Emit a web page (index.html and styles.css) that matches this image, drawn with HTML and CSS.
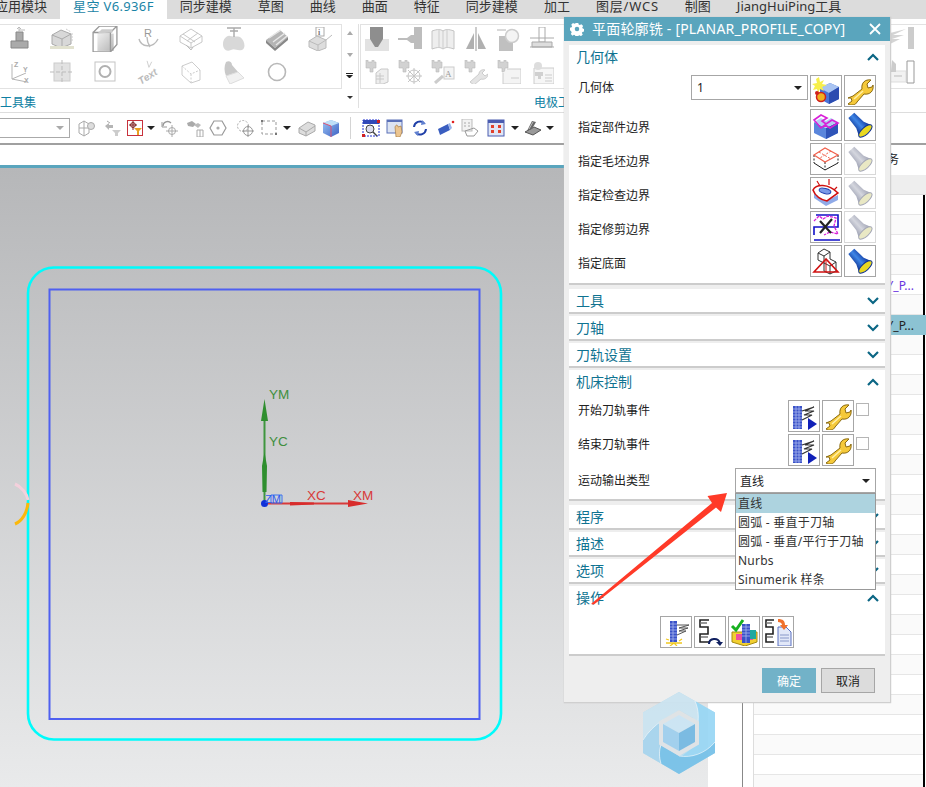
FILE: index.html
```html
<!DOCTYPE html>
<html lang="zh">
<head>
<meta charset="utf-8">
<title>平面轮廓铣</title>
<link rel="stylesheet" href="styles.css">
</head>
<body>
<svg class="defs" width="0" height="0" aria-hidden="true">
  <defs>
    <linearGradient id="gflash" x1="0" y1="0" x2="1" y2="0"><stop offset="0" stop-color="#0a2c8c"/><stop offset=".5" stop-color="#3f86e6"/><stop offset="1" stop-color="#0b2f96"/></linearGradient>
    <linearGradient id="gflashoff" x1="0" y1="0" x2="1" y2="0"><stop offset="0" stop-color="#9a9eb0"/><stop offset=".5" stop-color="#d4d6de"/><stop offset="1" stop-color="#a0a3b4"/></linearGradient>
    <linearGradient id="gwire" x1="0" y1="0" x2="1" y2="1"><stop offset="0" stop-color="#efefef"/><stop offset="1" stop-color="#b5b5b5"/></linearGradient>
    <linearGradient id="gblue" x1="0" y1="0" x2="1" y2="1"><stop offset="0" stop-color="#9cc4f4"/><stop offset="1" stop-color="#3d62c4"/></linearGradient>

    <symbol id="wrench" viewBox="0 0 28 28">
      <path d="M2 21l5-2 9-7c-1-6 3-10 9-9l-4 4 1 4 4-1 1-2c1 6-3 10-9 9l-7 8c-1 3-6 4-9 2l4-3-1-3z" fill="#f5c93a" stroke="#8a6a10" stroke-width="1"/>
      <path d="M8 22l9-8" stroke="#fff0a8" stroke-width="1.500" fill="none"/>
    </symbol>
    <symbol id="flash" viewBox="0 0 28 28">
      <g transform="rotate(-42 14 14)"><path d="M10 1h8l1 13 3 7H6l3-7z" fill="url(#gflash)"/><ellipse cx="14" cy="22" rx="8.500" ry="3.500" fill="#e8d820" stroke="#0b2f96"/></g>
    </symbol>
    <symbol id="flashoff" viewBox="0 0 28 28">
      <g transform="rotate(-42 14 14)"><path d="M10 1h8l1 13 3 7H6l3-7z" fill="url(#gflashoff)"/><ellipse cx="14" cy="22" rx="8.500" ry="3.500" fill="#e9e8c4" stroke="#a4a7b6"/></g>
    </symbol>
    <symbol id="geom" viewBox="0 0 28 28">
      <path d="M8 11l10-5 9 4v12l-10 5-9-5z" fill="#4a74d8"/><path d="M8 11l9 5 10-6-9-4z" fill="#a9c4f2"/><path d="M17 16v11l10-5V10z" fill="#2b4cb0"/>
      <path d="M7 0l1 5 4-2-2 4 5 1-5 2 2 4-4-2-2 4-1-4-4 1 2-4-3-2 5-1-1-4z" fill="#f7ef4a"/>
      <circle cx="9" cy="20" r="4.500" fill="#f0b020" stroke="#d0201c" stroke-width="1.500"/><circle cx="5" cy="16" r="2" fill="#d0201c"/>
    </symbol>
    <symbol id="part" viewBox="0 0 28 28">
      <path d="M2 11l12 6 12-6v11l-12 6-12-6z" fill="#5a86dc"/><path d="M14 17v11l12-6V11z" fill="#2f54b8"/><path d="M2 11l7-4 5 3 5-3 7 4-12 6z" fill="#b7cdf2"/>
      <path d="M2 9l7-5 6 3-5 3 4 3 6-4 6 3-8 5-5-3-4 3z" fill="none" stroke="#d820d8" stroke-width="1.600"/>
    </symbol>
    <symbol id="blank" viewBox="0 0 28 28">
      <path d="M2 18l11 7 13-7" fill="none" stroke="#222"/><path d="M2 10v8M26 10v8M13 17v8" stroke="#222" stroke-dasharray="2 1.500"/>
      <path d="M2 10l11-7 13 7-13 7z" fill="none" stroke="#f0604c" stroke-width="1.200"/><path d="M7 7l12 7M19 6l-11 7" stroke="#f0604c" stroke-dasharray="2 1.500"/>
    </symbol>
    <symbol id="check" viewBox="0 0 28 28">
      <path d="M2 14l12 8 12-6v5l-12 6-12-8z" fill="#8faae8"/>
      <path d="M1 11c3-6 15-7 25 3l-11 8C9 21 3 17 1 11z" fill="#fff" stroke="#d01010" stroke-width="1.600"/>
      <ellipse cx="13" cy="12" rx="6" ry="2.500" transform="rotate(14 13 12)" fill="#7a9ae8" stroke="#2040b0"/>
      <path d="M5 2l3 5M17 0v6M25 8l-3 3" stroke="#d01010" stroke-width="1.200"/>
    </symbol>
    <symbol id="trim" viewBox="0 0 28 28">
      <path d="M4 2h22v12H2v8M2 14h24M2 27h26" fill="none" stroke="#1010c8" stroke-width="1.600"/>
      <path d="M2 8l5-5 4 3 5-3 8 2-2 8 4 8-8-2-6 3" fill="none" stroke="#d820d8" stroke-dasharray="3 1" stroke-width="1.300"/>
      <path d="M8 8l11 12M20 6L8 20" stroke="#222" stroke-width="2.200"/>
    </symbol>
    <symbol id="floor" viewBox="0 0 28 28">
      <path d="M6 6l6-4 6 3v7l6 3v9l-6 3-6-3V16L6 13z" fill="#fff" stroke="#333"/><path d="M6 6l6 3 6-4M12 9v7M12 16l6 3 6-4M18 19v8" fill="none" stroke="#333"/>
      <path d="M14 12L2 25h24z" fill="none" stroke="#d01010" stroke-width="1.600"/><path d="M14 12v13" stroke="#d01010"/>
    </symbol>
    <symbol id="event" viewBox="0 0 28 28">
      <path d="M3 4h9v23H3z" fill="#3a52c8"/><path d="M3 7h9M3 10h9M3 13h9M3 16h9M3 19h9M3 22h9M3 25h9M6 4v23M9 4v23" stroke="#a8b6ee" stroke-width=".8"/>
      <path d="M12 9l12-4-9 4h9l-10 4h8l-10 5" fill="none" stroke="#333" stroke-width="1.200"/>
      <path d="M18 16l9 6-9 6z" fill="#1020b8"/>
    </symbol>
    <symbol id="gen" viewBox="0 0 28 28">
      <path d="M8 3h7v21H8z" fill="#3a52c8"/><path d="M8 6h7M8 9h7M8 12h7M8 15h7M8 18h7M8 21h7M11 3v21" stroke="#a8b6ee" stroke-width=".8"/>
      <path d="M15 7h12L17 10h9l-9 3h7l-9 4" fill="none" stroke="#555"/>
      <path d="M4 25h16M7 22l-3-1M17 23l3-2M8 28l4-3 3 3" stroke="#f0c820" stroke-width="1.300" fill="none"/>
    </symbol>
    <symbol id="replay" viewBox="0 0 28 28">
      <path d="M13 2H4v7h8v7H4v8h9" fill="none" stroke="#222" stroke-width="1.600"/><path d="M4 5h7M5 19h7" stroke="#777" stroke-width="1.600"/>
      <path d="M13 26c0-6 9-7 11-1" fill="none" stroke="#102060" stroke-width="2"/><path d="M20 24h7l-3 4z" fill="#102060"/>
    </symbol>
    <symbol id="verify" viewBox="0 0 28 28">
      <path d="M2 14h25v10l-12 4-13-4z" fill="#f2cf30" stroke="#a58a10"/><path d="M6 16h17v6H6z" fill="#ee4fa0"/>
      <path d="M12 6h8v19h-8z" fill="#3a52c8"/><path d="M12 9h8M12 12h8M12 15h8M12 18h8M16 6v19" stroke="#a8b6ee" stroke-width=".8"/><path d="M20 12h6v9h-6z" fill="#20a8a0"/>
      <path d="M2 8l4 4 7-10" fill="none" stroke="#18b020" stroke-width="3"/>
    </symbol>
    <symbol id="list" viewBox="0 0 28 28">
      <path d="M10 2H2v7h7v7H2v8h8" fill="none" stroke="#222" stroke-width="1.600"/><path d="M2 5h6M3 19h6" stroke="#777" stroke-width="1.600"/>
      <path d="M14 9h8l5 5v14H14z" fill="#e2e8f8" stroke="#5a70c0"/><path d="M16 17h9M16 20h9M16 23h9" stroke="#8898c8"/>
      <path d="M14 1c5 0 7 2 7 6h3l-4 5-4-5h2c0-2-2-3-4-3z" fill="#f0702c"/>
    </symbol>
    <symbol id="chevup" viewBox="0 0 12 8"><path d="M1 7l5-5 5 5" fill="none" stroke="#0b6684" stroke-width="2.200"/></symbol>
    <symbol id="chevdown" viewBox="0 0 12 8"><path d="M1 1l5 5 5-5" fill="none" stroke="#0b6684" stroke-width="2.200"/></symbol>

    <symbol id="plug" viewBox="0 0 24 24"><path d="M1 0h2v2h4V0h2v2h2v6H8v4H5V8H1z" fill="#d2d2d2" stroke="#bbb" stroke-width=".6"/></symbol>
  </defs>
</svg>

<div class="app">
  <nav class="tabs">
    <span class="tab">应用模块</span>
    <span class="tab active">星空 V6.936F</span>
    <span class="tab">同步建模</span>
    <span class="tab">草图</span>
    <span class="tab">曲线</span>
    <span class="tab">曲面</span>
    <span class="tab">特征</span>
    <span class="tab">同步建模</span>
    <span class="tab">加工</span>
    <span class="tab tab-w">图层/WCS</span>
    <span class="tab">制图</span>
    <span class="tab">JiangHuiPing工具</span>
  </nav>

  <section class="ribbon">
    <div class="rg1">
      <div class="rcol">
        <div class="rbox grid8">
          <svg class="ri" viewBox="0 0 24 24"><path d="M9 5h7v9H9z" fill="#aaa" stroke="#888"/><path d="M4 14h17v7H4z" fill="#aaa" stroke="#888"/><path d="M12 5V0M10 2l2-2 2 2M12 3h6" fill="none" stroke="#bbb"/></svg>
          <svg class="ri" viewBox="0 0 24 24"><path d="M2 8l9-5 10 4v10l-10 4-9-4z" fill="#d8d8d8" stroke="#aaa"/><path d="M2 8l10 4 9-5M12 12v9" fill="none" stroke="#aaa"/><path d="M0 19h24v3H0z" fill="#e2e2d0"/><path d="M16 2l5 3M22 6v8" stroke="#ccc" stroke-dasharray="2 1"/></svg>
          <svg class="ri ri-lg" viewBox="0 0 24 24"><path d="M5 7h15v16H5z" fill="url(#gwire)"/><path d="M1 6h16v18H1zM1 6l6-6h16v17l-6 7M17 6l6-6" fill="none" stroke="#999" stroke-width="1.200"/><path d="M5 7l4-4h10v3" fill="#ccc"/></svg>
          <svg class="ri" viewBox="0 0 24 24"><text x="8" y="10" class="ri-t">R</text><path d="M3 12c2 8 14 10 19 0M11 10c0 4 1 7 3 10" fill="none" stroke="#bbb" stroke-width="1.400"/></svg>
          <svg class="ri" viewBox="0 0 24 24"><path d="M1 9l11-7 11 7-11 7zM1 9v6l11 6 11-6V9M12 16v5M4 7l12 8M19 6L8 14" fill="none" stroke="#c8c8c8"/><path d="M7 18l5 5 2-3" fill="none" stroke="#bbb"/></svg>
          <svg class="ri" viewBox="0 0 24 24"><path d="M1 17c0-5 4-9 7-8 4 1 8 0 10 1 5 3 6 12 2 13-6 1-7-2-11 0-5 2-8-1-8-6z" fill="#d8d8d8"/><path d="M5 1h14M12 1v9M8 4h8" stroke="#aaa" stroke-width="1.400"/></svg>
          <svg class="ri" viewBox="0 0 24 24"><path d="M1 13L15 3l8 7-13 11z" fill="#b5b5b5"/><path d="M4 11l12-8M8 15l12-9M11 18l11-9" stroke="#e8e8e8" stroke-width="1.400"/><path d="M1 13v3l9 8 13-11v-3L10 21z" fill="#888"/></svg>
          <svg class="ri" viewBox="0 0 24 24"><rect x="8" y="0" width="8" height="9" fill="#fff" stroke="#aaa"/><text x="10" y="8" class="ri-i">i</text><path d="M1 14l8-5 9 4v8l-8 3-9-4z" fill="#ddd" stroke="#bbb"/><path d="M1 14l9 4 8-5M10 18v6M18 13l6-5" fill="none" stroke="#bbb"/></svg>

          <svg class="ri" viewBox="0 0 24 24"><path d="M5 19V4M5 19l14-6M5 19l15 3" stroke="#b5b5b5" fill="none"/><text x="7" y="7" class="ri-s">Z</text><text x="16" y="12" class="ri-s">Y</text><text x="17" y="23" class="ri-s">X</text></svg>
          <svg class="ri" viewBox="0 0 24 24"><rect x="4" y="3" width="16" height="18" fill="#e2e2e2" stroke="#ccc"/><path d="M12 0v24M0 12h24" stroke="#bbb" stroke-dasharray="4 2"/></svg>
          <svg class="ri" viewBox="0 0 24 24"><rect x="2" y="2" width="20" height="19" fill="none" stroke="#c4c4c4"/><circle cx="12" cy="11.500" r="5.500" fill="none" stroke="#b0b0b0" stroke-width="2"/></svg>
          <svg class="ri ri-lg" viewBox="0 0 28 24"><text x="1" y="20" class="ri-text" transform="rotate(-32 14 14)">Text</text><path d="M13 0l2 7 3-6" fill="none" stroke="#ccc"/></svg>
          <svg class="ri" viewBox="0 0 24 24"><path d="M3 6l10-4 8 8v10l-9 3-9-8z" fill="none" stroke="#ccc"/><path d="M3 6l9 8 9-4M12 14v9" fill="none" stroke="#ccc" stroke-dasharray="2 1.500"/></svg>
          <svg class="ri" viewBox="0 0 24 24"><path d="M4 2c3-2 6 0 6 3l6 7-12 4c-2-5-2-10 0-14z" fill="#c9c9c9"/><path d="M4 16l12-4 6 6-14 6z" fill="#f1f1f1" stroke="#ddd"/></svg>
          <svg class="ri" viewBox="0 0 24 24"><circle cx="12" cy="12" r="8.500" fill="none" stroke="#b8b8b8" stroke-width="1.600"/></svg>
        </div>
        <div class="rlabel"><span>工具集</span></div>
      </div>
      <div class="rscroll">
        <i class="up"></i><i class="down"></i><i class="menu"></i><i class="more"></i>
      </div>
    </div>
    <div class="rg2">
      <div class="rbox rbox2">
        <div class="grid6">
          <svg class="ri" viewBox="0 0 24 24"><path d="M0 12h24v13H0z" fill="#e2e2e2"/><path d="M5 0h13v12l-5 8h-3l-5-8z" fill="#8e8e8e"/></svg>
          <svg class="ri" viewBox="0 0 24 24"><path d="M0 11h9l4-3h3V0h8v22h-8v-6h-3l-4-3H0z" fill="#bdbdbd"/></svg>
          <svg class="ri" viewBox="0 0 24 24"><path d="M1 4c6-2 8-2 11 0 3-2 5-2 11 0v18c-6-2-8-2-11 0-3-2-5-2-11 0z" fill="#eee" stroke="#c4c4c4"/><path d="M12 4v18M8 3v18M16 3v18" stroke="#ccc"/></svg>
          <svg class="ri" viewBox="0 0 24 24"><path d="M2 22L10 6v16zM22 22L14 6v16z" fill="#b0b0b0"/><path d="M12 0v24" stroke="#999"/></svg>
          <svg class="ri" viewBox="0 0 24 24"><path d="M2 9h14v15H2z" fill="#c0c0c0"/><circle cx="15" cy="9" r="6.500" fill="#f4f4f4" stroke="#ccc" stroke-width="1.500"/><path d="M0 3h9" stroke="#ccc" stroke-width="1.500"/></svg>
          <svg class="ri" viewBox="0 0 24 24"><path d="M9 0h6v15H9z" fill="#fff" stroke="#aaa"/><path d="M0 11h24M2 15h20v5H2zM0 20h24" fill="#ddd" stroke="#aaa"/></svg>

          <svg class="ri" viewBox="0 0 24 24"><use href="#plug" width="24" height="24"/><path d="M11 13l5-4h7v13l-5 2h-7z" fill="#eee" stroke="#c8c8c8"/><path d="M11 16h8M11 19h8M15 13v10" stroke="#c8c8c8"/></svg>
          <svg class="ri" viewBox="0 0 24 24"><use href="#plug" width="24" height="24"/><circle cx="16" cy="16" r="6" fill="none" stroke="#c4c4c4"/><path d="M16 8v16M8 16h16M10 10l12 12M22 10L10 22" stroke="#c4c4c4"/></svg>
          <svg class="ri" viewBox="0 0 24 24"><use href="#plug" width="24" height="24"/><rect x="13" y="7" width="10" height="12" fill="#f4f4f4" stroke="#ccc"/><text x="14" y="17" class="ri-a">A</text><path d="M4 23l8-7" stroke="#ccc" stroke-width="3"/></svg>
          <svg class="ri" viewBox="0 0 24 24"><use href="#plug" width="24" height="24"/><path d="M6 22l9-8c0-3 3-5 6-4l-3 3 3 3 3-2c0 4-4 6-7 5l-7 6z" fill="#e4e4e4" stroke="#ccc"/></svg>
          <svg class="ri" viewBox="0 0 24 24"><use href="#plug" width="24" height="24"/><path d="M10 9h14v15H6V13" fill="#f4f4f4" stroke="#ccc"/><path d="M14 18h8" stroke="#ccc"/></svg>
          <svg class="ri" viewBox="0 0 24 24"><path d="M4 8h20v16H4z" fill="#f6f6f6" stroke="#ccc"/><path d="M15 15h7M15 18h7M15 21h7" stroke="#ccc"/><circle cx="8" cy="6" r="4" fill="#ddd"/><path d="M5 12h8v4h-2v3H8v-3H5z" fill="#d0d0d0"/></svg>
        </div>
        <div class="grid2">
          <svg class="ri" viewBox="0 0 24 24"><path d="M0 6h8l16-4-13 6h11l-12 4h8l-10 5h-3l-1 6-3-6z" fill="#d4d4d4"/></svg>
          <svg class="ri" viewBox="0 0 24 24"><path d="M2 0h6v22H2z" fill="#ccc"/></svg>
          <svg class="ri" viewBox="0 0 24 24"><path d="M2 11h22v11H2z" fill="#f2f2f2" stroke="#ddd"/><path d="M10 0l4 4v8h-5z" fill="#ccc"/><path d="M12 16h8" stroke="#bbb"/></svg>
          <svg class="ri" viewBox="0 0 24 24"><path d="M1 1h7v22H1z" fill="none" stroke="#999"/></svg>
        </div>
      </div>
      <div class="rlabel rlabel2"><span>电极工具</span></div>
    </div>
  </section>

  <section class="toolbar">
    <div class="tcombo"><i class="caret caret-grey"></i></div>
    <svg class="ti g8" viewBox="0 0 18 18"><path d="M1 5l5-3 5 3v9l-5 3-5-3zM6 2v15M1 9h10" fill="none" stroke="#aaa"/><circle cx="13" cy="7" r="3.500" fill="#ddd" stroke="#aaa"/></svg>
    <svg class="ti g8" viewBox="0 0 18 18"><path d="M1 7l4-3v2h4v3H5v2z" fill="#b5b5b5"/><path d="M8 11h9l-3 3v3h-3v-3z" fill="#ccc"/><path d="M3 2l3 2" stroke="#aaa"/></svg>
    <span class="ti g5 tbox"><svg viewBox="0 0 14 14"><path d="M5 0v9M1 4h8" stroke="#7a1a1a"/><circle cx="5" cy="4" r="2.400" fill="none" stroke="#7a1a1a"/><path d="M6 7h8l-3 3v4H9v-4z" fill="#e8a020"/></svg></span>
    <i class="caret g4"></i>
    <svg class="ti g6" viewBox="0 0 18 18"><path d="M2 7c0-4 5-6 8-3" fill="none" stroke="#999" stroke-width="1.400"/><path d="M1 3v5h5" fill="none" stroke="#999"/><circle cx="11" cy="12" r="3.500" fill="none" stroke="#aaa"/><path d="M11 6v12M5 12h12" stroke="#aaa"/></svg>
    <svg class="ti g7" viewBox="0 0 18 18"><path d="M1 4l5-2 4 3-3 3-5-1z" fill="#aaa"/><path d="M8 6l4-2 3 2-3 3z" fill="#bbb"/><path d="M11 11h6v7h-6zM14 11v7" fill="none" stroke="#aaa"/></svg>
    <svg class="ti g5" viewBox="0 0 18 18"><path d="M5 2h8l4 7-4 7H5L1 9z" fill="none" stroke="#999" stroke-width="1.200"/><circle cx="9" cy="9" r="1.600" fill="#aaa"/></svg>
    <svg class="ti g9" viewBox="0 0 18 18"><circle cx="7" cy="7" r="5.500" fill="none" stroke="#aaa" stroke-dasharray="2 1.500"/><circle cx="12" cy="12" r="4.500" fill="none" stroke="#999"/><path d="M12 6v12M6 12h12" stroke="#999"/></svg>
    <svg class="ti" viewBox="0 0 18 18"><rect x="2" y="2" width="14" height="13" fill="none" stroke="#999" stroke-dasharray="3 2"/><rect x="1" y="1" width="2" height="2" fill="#777"/><rect x="15" y="14" width="2" height="2" fill="#777"/></svg>
    <i class="caret g5"></i>
    <svg class="ti g7" viewBox="0 0 18 18"><path d="M1 9l9-6 7 3v6l-9 5-7-3z" fill="#ddd" stroke="#aaa"/><path d="M1 9l7 4 9-6M8 13v4" fill="none" stroke="#aaa"/></svg>
    <svg class="ti" viewBox="0 0 18 18"><path d="M1 4l8-3 8 3v10l-8 4-8-4z" fill="url(#gblue)"/><path d="M1 4l8 3 8-3-8-3z" fill="#bfe0f8"/><path d="M1 4l8 3v11" fill="none" stroke="#e05070"/></svg>
    <i class="tsep g10"></i>
    <svg class="ti g11" viewBox="0 0 18 18"><rect x="1" y="1" width="16" height="16" fill="#fff" stroke="#2030d0" stroke-dasharray="2 1"/><rect x="1" y="1" width="16" height="4" fill="#3048b8"/><circle cx="8" cy="10" r="4" fill="#dde" stroke="#444"/><path d="M11 13l4 4" stroke="#444" stroke-width="1.500"/><rect x="15" y="1" width="3" height="3" fill="#d02020"/><rect x="0" y="15" width="3" height="3" fill="#d02020"/></svg>
    <svg class="ti" viewBox="0 0 18 18"><rect x="1" y="1" width="15" height="13" fill="#dde4f2" stroke="#5a70b8"/><path d="M1 1h15v2H1z" fill="#5a70b8"/><path d="M9 8c1-3 3-2 3 0l3-1 1 6-2 5H10z" fill="#ecc590" stroke="#9a7038" stroke-width=".6"/></svg>
    <svg class="ti g7" viewBox="0 0 18 18"><path d="M3 8a6 6 0 0 1 10-4" fill="none" stroke="#2040a8" stroke-width="2"/><path d="M15 10a6 6 0 0 1-10 4" fill="none" stroke="#2040a8" stroke-width="2"/><path d="M11 1l4 4-5 1zM7 17l-4-4 5-1z" fill="#6080d0"/></svg>
    <svg class="ti g8" viewBox="0 0 18 18"><path d="M1 10l10-5 2 6-10 5z" fill="#3a5ec0"/><path d="M11 5l2 6 2-2-2-5z" fill="#9ab4ea"/><circle cx="16" cy="3" r="1.300" fill="#e02020"/></svg>
    <svg class="ti" viewBox="0 0 18 18"><rect x="1" y="0" width="10" height="12" fill="#f2f2f2" stroke="#bbb"/><path d="M3 4h2M3 7h2M7 4h2M7 7h2" stroke="#aaa"/><path d="M4 12l9-3 4 3-4 5H6z" fill="none" stroke="#999"/></svg>
    <svg class="ti g8" viewBox="0 0 18 18"><rect x="1" y="1" width="16" height="16" fill="#dfe6f5" stroke="#4a5cb0"/><rect x="1" y="1" width="16" height="3" fill="#4a5cb0"/><path d="M4 6h3v3H4zM11 6h3v3h-3zM4 11h3v3H4zM11 11h3v3h-3z" fill="#e0402c"/></svg>
    <i class="caret"></i>
    <svg class="ti g5" viewBox="0 0 18 18"><path d="M1 13l9-5 7 3-8 5z" fill="#999" stroke="#555"/><path d="M3 12L8 2l4 1-4 7z" fill="#666"/><path d="M5 10l4-7" stroke="#bbb"/></svg>
    <i class="caret g4"></i>
  </section>

  <main class="main">
    <div class="viewwrap">
      <div class="view">
        <svg class="scene" viewBox="0 168 708 619">
          <rect x="28" y="267.500" width="473" height="472" rx="26" fill="none" stroke="#00fbfb" stroke-width="2.600"/>
          <rect x="49.500" y="289.500" width="430" height="429.500" fill="none" stroke="#4f60f0" stroke-width="2"/>
          <path d="M15 484c7 3 12 10 13 16" fill="none" stroke="#f4d0dc" stroke-width="3"/>
          <path d="M28 503c-1 10-6 18-13 21" fill="none" stroke="#fbb80a" stroke-width="3"/>
          <path d="M264.500 503V410" stroke="#3f963f" stroke-width="2"/>
          <path d="M264.500 399l-3.500 22h7zM264.500 452l-2.500 14 .5 26h4l.5-26z" fill="#2f8f2f"/>
          <path d="M265 503.500h93" stroke="#d83a3a" stroke-width="2"/>
          <path d="M368 503.500l-20-3.500v7zM290 502l24 .5v2l-24 1z" fill="#d82c2c"/>
          <circle cx="264.500" cy="503.500" r="3.500" fill="#1030d8"/>
          <path d="M271 495h11v8h-11z" fill="none" stroke="#3a70f0"/>
          <text class="scene-z" x="265" y="503">ZM</text>
          <text class="scene-g" x="269" y="399">YM</text>
          <text class="scene-g" x="269" y="446">YC</text>
          <text class="scene-r" x="307" y="500">XC</text>
          <text class="scene-r" x="353" y="500">XM</text>
        </svg>
      </div>
    </div>
    <aside class="side">
      <div class="strip"></div>
      <div class="panel">
        <div class="navcap">任务</div>
        <div class="thead"></div>
        <div class="tree">
          <div class="trow"></div>
          <div class="trow"></div>
          <div class="trow"></div>
          <div class="trow"></div>
          <div class="trow purple">COPY_P...</div>
          <div class="trow"></div>
          <div class="trow sel">COPY_P...</div>
        </div>
      </div>
    </aside>
  </main>
</div>

<div class="dialog">
  <header class="dlg-title">
    <svg class="gear" viewBox="0 0 16 16"><path d="M6.500 1h3l.4 1.800 1.300.6L13 2.500l2 2-1 1.700.6 1.300 1.400.4v3l-1.800.4-.6 1.300 1 1.600-2 2-1.700-1-1.300.6-.4 1.200h-3l-.4-1.800-1.300-.6-1.600 1-2-2 1-1.700-.6-1.300L0 9.500v-3l1.800-.4.600-1.300-1-1.700 2-2 1.700 1 1.300-.6z" fill="#fff"/><circle cx="8" cy="8" r="2.600" fill="#5aa5bd"/></svg>
    <span class="dlg-name">平面轮廓铣 - [PLANAR_PROFILE_COPY]</span>
    <svg class="close" viewBox="0 0 12 12"><path d="M1 1l10 10M11 1L1 11" stroke="#fff" stroke-width="1.800"/></svg>
  </header>
  <div class="dlg-body">
    <section class="sec">
      <div class="sec-head"><span>几何体</span><svg class="chev"><use href="#chevup"/></svg></div>
      <div class="row">
        <span class="lab lab-c">几何体</span>
        <div class="combo combo-geo"><span>1</span><i class="caret"></i></div>
        <button class="ib"><svg><use href="#geom"/></svg></button>
        <button class="ib"><svg><use href="#wrench"/></svg></button>
      </div>
      <div class="row"><span class="lab lab-d">指定部件边界</span><button class="ib"><svg><use href="#part"/></svg></button><button class="ib"><svg><use href="#flash"/></svg></button></div>
      <div class="row"><span class="lab lab-d">指定毛坯边界</span><button class="ib"><svg><use href="#blank"/></svg></button><button class="ib off"><svg><use href="#flashoff"/></svg></button></div>
      <div class="row"><span class="lab lab-d">指定检查边界</span><button class="ib"><svg><use href="#check"/></svg></button><button class="ib off"><svg><use href="#flashoff"/></svg></button></div>
      <div class="row"><span class="lab lab-d">指定修剪边界</span><button class="ib"><svg><use href="#trim"/></svg></button><button class="ib off"><svg><use href="#flashoff"/></svg></button></div>
      <div class="row"><span class="lab lab-d">指定底面</span><button class="ib"><svg><use href="#floor"/></svg></button><button class="ib"><svg><use href="#flash"/></svg></button></div>
    </section>
    <section class="sec closed"><div class="sec-head"><span>工具</span><svg class="chev"><use href="#chevdown"/></svg></div></section>
    <section class="sec closed"><div class="sec-head"><span>刀轴</span><svg class="chev"><use href="#chevdown"/></svg></div></section>
    <section class="sec closed"><div class="sec-head"><span>刀轨设置</span><svg class="chev"><use href="#chevdown"/></svg></div></section>
    <section class="sec">
      <div class="sec-head"><span>机床控制</span><svg class="chev"><use href="#chevup"/></svg></div>
      <div class="row"><span class="lab lab-t">开始刀轨事件</span><button class="ib"><svg><use href="#event"/></svg></button><button class="ib"><svg><use href="#wrench"/></svg></button><i class="cb"></i></div>
      <div class="row"><span class="lab lab-t">结束刀轨事件</span><button class="ib"><svg><use href="#event"/></svg></button><button class="ib"><svg><use href="#wrench"/></svg></button><i class="cb"></i></div>
      <div class="row">
        <span class="lab lab-c">运动输出类型</span>
        <div class="combo combo-type"><span>直线</span><i class="caret"></i>
          <ul class="menu-list">
            <li class="hl">直线</li>
            <li>圆弧 - 垂直于刀轴</li>
            <li>圆弧 - 垂直/平行于刀轴</li>
            <li>Nurbs</li>
            <li>Sinumerik 样条</li>
          </ul>
        </div>
      </div>
    </section>
    <section class="sec closed"><div class="sec-head"><span>程序</span><svg class="chev"><use href="#chevdown"/></svg></div></section>
    <section class="sec closed"><div class="sec-head"><span>描述</span><svg class="chev"><use href="#chevdown"/></svg></div></section>
    <section class="sec closed"><div class="sec-head"><span>选项</span><svg class="chev"><use href="#chevdown"/></svg></div></section>
    <section class="sec">
      <div class="sec-head"><span>操作</span><svg class="chev"><use href="#chevup"/></svg></div>
      <div class="row ops">
        <button class="ib"><svg><use href="#gen"/></svg></button>
        <button class="ib"><svg><use href="#replay"/></svg></button>
        <button class="ib"><svg><use href="#verify"/></svg></button>
        <button class="ib"><svg><use href="#list"/></svg></button>
      </div>
    </section>
    <footer class="dlg-foot">
      <button class="btn ok">确定</button>
      <button class="btn">取消</button>
    </footer>
  </div>
</div>

<svg class="logo" viewBox="0 0 72 82">
  <path d="M36 0L72 20.500V61L36 82 0 61V20.500z" fill="#b5dcf0"/>
  <path d="M0 20.500L36 0l16 9c4 9 4 19 2 27l-4-10-14-8-16 10C12 33 5 40 0 48z" fill="#cbe4f1"/>
  <path d="M52 9l20 11.500V50c-6 8-14 12-22 14-4 2-8 2-12 1l15-12 1-17c2-8 2-18-2-27z" fill="#97d6f5"/>
  <path d="M18 53l18 11c12 2 26-2 36-14v11L36 82 18 71.500c-2-6-2-13.500 0-18.500z" fill="#74c0e8"/>
  <path d="M0 48c5-8 12-15 20-20l-2 25c-2 5-2 12.500 0 18.500L0 61z" fill="#a5d4ee"/>
  <path d="M52 9c4 9 4 19 2 27M0 48c5-8 12-15 20-20M72 50c-10 12-24 16-36 14M18 53c-2 5-2 12.500 0 18.500" fill="none" stroke="#fff" stroke-opacity=".6"/>
  <path d="M36 18l20 11.500v23L36 64 16 52.500v-23z" fill="#dfe3e6"/>
  <path d="M36 23l16 9-16 9-16-9z" fill="#cbe5f5"/>
  <path d="M20 32l16 9v18l-16-9z" fill="#9dcfee"/>
  <path d="M52 32l-16 9v18l16-9z" fill="#73b8e2"/>
</svg>

<svg class="arrow" viewBox="585 490 147 118">
  <path d="M591 604L712 503l-4.500-7 19.500-3-6 19-5-4.500L594 604.500z" fill="#ff3a28"/>
</svg>
</body>
</html>
```
FILE: styles.css
```css
* { box-sizing: border-box; }
html, body { margin: 0; height: 100%; }
body {
  width: 926px;
  height: 787px;
  overflow: hidden;
  position: relative;
  background: #fff;
  color: #222;
  font-family: "Noto Sans", "Noto Sans CJK SC", sans-serif;
  font-size: 12px;
}
.defs { position: absolute; }
i { display: block; }

.app { display: flex; flex-direction: column; height: 787px; }

/* tabs */
.tabs { display: flex; height: 19px; flex: none; margin-left: -18px; background: #dcdcdc; width: 944px; }
.tab { padding: 0 13px; font-size: 13px; line-height: 12px; white-space: nowrap; color: #333; }
.tab.active { background: #fff; color: #1a84a6; height: 19px; letter-spacing: .36px; }
.tab-w { letter-spacing: .8px; }

/* ribbon */
.ribbon { display: flex; flex: none; height: 94px; padding-top: 5px; border-bottom: 1px solid #ddd; overflow: hidden; background: #fff; }
.rg1 { display: flex; flex: none; width: 360px; margin-left: -4px; margin-right: 4px; height: 84px; }
.rcol { width: 346px; flex: none; }
.rbox { border: 2px solid #e2e2e2; height: 65px; background: #fff; }
.grid8 { display: grid; grid-template-columns: repeat(8, 43px); grid-auto-rows: 28px; row-gap: 5px; justify-items: center; align-items: center; border-width: 1px; }
.ri { width: 24px; height: 24px; display: block; }
.ri-lg { width: 26px; height: 26px; }
.ri-t { font: 11px "Liberation Sans", sans-serif; fill: #999; }
.ri-i { font: bold 8px "Liberation Serif", serif; fill: #777; }
.ri-s { font: bold 7px "Liberation Sans", sans-serif; fill: #aaa; }
.ri-a { font: 9px "Liberation Serif", serif; fill: #999; }
.ri-text { font: italic bold 11px "Liberation Sans", sans-serif; fill: #bbb; }
.rlabel { height: 18px; font-size: 12px; color: #0f7fa3; padding: 7px 0 0 4px; line-height: 14px; }
.rscroll { width: 18px; flex: none; display: flex; flex-direction: column; align-items: center; border-right: 1px solid #e0e0e0; margin-left: -1px; height: 84px; }
.rscroll i { border-left: 3px solid transparent; border-right: 3px solid transparent; }
.rscroll .up { margin-top: 7px; border-bottom: 4px solid #aaa; }
.rscroll .down { margin-top: 18px; border-top: 4px solid #aaa; }
.rscroll .menu { margin-top: 16px; width: 7px; height: 5px; border: 0; border-top: 1px solid #222; }
.rscroll .menu::after { content: ""; display: block; margin-top: 1px; border-left: 3.500px solid transparent; border-right: 3.500px solid transparent; border-top: 3.500px solid #222; }
.rscroll .more { margin-top: 18px; border-top: 3px solid #333; }
.rg2 { flex: 1; min-width: 0; margin-right: -3px; }
.rbox2 { display: flex; border-width: 1px; border-right: 0; }
.grid6 { display: grid; grid-template-columns: repeat(6, 33px); grid-auto-rows: 28px; row-gap: 5px; justify-items: center; align-items: center; margin-left: -1px; }
.grid2 { display: grid; grid-template-columns: repeat(2, 24px); grid-auto-rows: 28px; row-gap: 5px; justify-items: center; align-items: center; margin-left: auto; margin-right: -1px; }
.rlabel2 { padding-left: 174px; white-space: nowrap; }

/* toolbar */
.toolbar { display: flex; flex: none; align-items: center; height: 32px; border-bottom: 2px solid #a0a0a0; background: #fff; }
.tcombo { width: 71px; height: 20px; margin-left: -1px; border: 1px solid #aaa; display: flex; align-items: center; justify-content: flex-end; padding-right: 5px; flex: none; }
.ti { width: 18px; height: 18px; flex: none; margin-left: 6px; display: block; }
.tbox { border: 1px solid #c8313c; width: 16px; height: 16px; }
.tbox svg { display: block; width: 14px; height: 14px; }
.caret { flex: none; width: 0; height: 0; border-left: 4px solid transparent; border-right: 4px solid transparent; border-top: 4px solid #222; margin-left: 6px; }
.caret-grey { border-top-color: #aaa; }
.tsep { width: 1px; height: 22px; background: #d4d4d4; flex: none; }
.g4 { margin-left: 4px; } .g5 { margin-left: 5px; } .g7 { margin-left: 7px; } .g8 { margin-left: 8px; }
.g9 { margin-left: 9px; } .g10 { margin-left: 10px; } .g11 { margin-left: 11px; }

/* main */
.main { flex: 1; display: flex; min-height: 0; }
.viewwrap { width: 708px; flex: none; padding-top: 20px; display: flex; }
.view { flex: 1; border-top: 3px solid #5aa5bd; background: linear-gradient(#b6b7b9, #e9eaeb); }
.scene { display: block; width: 708px; height: 619px; }
.scene text { font-family: "Liberation Sans", sans-serif; font-size: 13.500px; }
.scene-g { fill: #3f8f3f; }
.scene-r { fill: #d83a3a; }
.scene .scene-z { fill: #2d5cf0; font-size: 11px; }
.side { flex: 1; display: flex; min-width: 0; background: #fff; }
.strip { width: 35px; flex: none; border-right: 1px solid #888; }
.panel { flex: 1; min-width: 0; margin-left: 10px; border-left: 1px solid #ddd; }
.navcap { height: 30px; padding: 6px 27px 0 0; text-align: right; font-size: 12px; line-height: 18px; color: #222; }
.thead { height: 20px; background: #eee; border-bottom: 1px solid #ddd; }
.tree { height: 592px; border-right: 2px solid #000; margin-right: 1px; background: repeating-linear-gradient(#fff 0 19px, #e6e6e6 19px 20px, #fafafa 20px 39px, #e6e6e6 39px 40px); }
.trow { height: 20px; line-height: 21px; text-align: right; padding-right: 9px; font-size: 12px; white-space: nowrap; }
.trow.purple { color: #6a35e0; }
.trow.sel { background: #8cc3d3; color: #222; margin-right: -3px; padding-right: 12px; }

/* dialog */
.dialog { position: absolute; left: 564px; top: 17px; width: 327px; height: 686px; background: #eeeeee; border-right: 1px solid #cfcfcf; border-bottom: 1px solid #cfcfcf; display: flex; flex-direction: column; box-shadow: 0 0 1px #bbb; }
.dlg-title { height: 24px; flex: none; background: #5aa5bd; color: #fff; display: flex; align-items: center; padding: 0 8px 0 6px; }
.gear { width: 14px; height: 14px; flex: none; }
.dlg-name { flex: 1; margin-left: 8px; font-size: 14px; line-height: 24px; white-space: nowrap; letter-spacing: .2px; }
.close { width: 12px; height: 12px; flex: none; margin-right: 1px; }
.dlg-body { flex: 1; padding: 4px 5px 0 5px; display: flex; flex-direction: column; gap: 4px; }
.sec { background: #fff; border-bottom: 2px solid #ccc; padding: 0 9px 6px 9px; }
.sec-head { height: 30px; margin: 0 -2px; display: flex; justify-content: space-between; align-items: center; font-size: 14px; line-height: 16px; color: #0f7391; padding-bottom: 6px; }
.closed { height: 25px; margin-bottom: -2px; padding-bottom: 0; }
.closed .sec-head { height: 23px; padding: 0; }
.chev { width: 12px; height: 8px; display: block; margin-right: -1px; }
.row { display: flex; gap: 2px; margin-top: 2px; }
.sec-head + .row { margin-top: 0; }
.lab { flex: 1; min-width: 0; font-size: 12px; line-height: 16px; color: #222; }
.lab-c { line-height: 25px; }
.lab-d { padding-top: 11px; }
.lab-t { padding-top: 3px; }
.ib { width: 32px; height: 32px; flex: none; padding: 1px; border: 1px solid #a6a6a6; background: #fff; display: block; }
.ib svg { display: block; width: 28px; height: 28px; }
.ib.off { border-color: #d8d8d8; }
.combo { height: 25px; border: 1px solid #a6a6a6; background: #fff; display: flex; align-items: center; justify-content: space-between; padding: 0 5px 0 4px; position: relative; font-size: 12px; flex: none; }
.combo-geo { width: 117px; padding-left: 5px; }
.combo-type { width: 141px; }
.cb { width: 13px; height: 13px; border: 1px solid #b5b5b5; background: #fff; margin: 3px 7px 0 0; flex: none; }
.menu-list { list-style: none; margin: 0; padding: 0; position: absolute; left: -1px; top: 24px; width: 141px; height: 97px; border: 1px solid #999; background: #fff; z-index: 2; }
.menu-list li { height: 19px; line-height: 19px; padding-left: 2px; white-space: nowrap; color: #333; letter-spacing: .25px; }
.menu-list .hl { background: #add3df; }
.ops { justify-content: center; margin: 0 -9px; }
.dlg-foot { display: flex; justify-content: flex-end; gap: 5px; padding: 8px 10px 0 0; }
.btn { width: 54px; height: 25px; padding: 0; font: 12px "Noto Sans", "Noto Sans CJK SC", sans-serif; border: 1px solid #a6a6a6; background: #dcdcdc; color: #222; }
.btn.ok { background: #72b2c8; border-color: #72b2c8; color: #fff; }

/* overlays */
.logo { position: absolute; left: 643px; top: 692px; width: 72px; height: 82px; opacity: .92; }
.arrow { position: absolute; left: 585px; top: 490px; width: 147px; height: 118px; }
```
